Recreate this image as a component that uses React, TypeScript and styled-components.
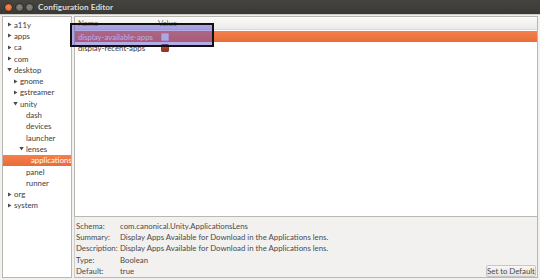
import React from 'react';
import styled, { createGlobalStyle } from 'styled-components';

const GlobalStyle = createGlobalStyle`
  html, body {
    margin: 0;
    padding: 0;
    background: #f2f1f0;
  }
  body {
    font-family: Lato, "Liberation Sans", sans-serif;
    font-size: 7.8px;
    color: #3c3c3c;
  }
`;

type TreeItem = { label: string; depth: number; arrow?: 'right' | 'down'; selected?: boolean };

const treeItems: TreeItem[] = [
  { label: 'a11y', depth: 0, arrow: 'right' },
  { label: 'apps', depth: 0, arrow: 'right' },
  { label: 'ca', depth: 0, arrow: 'right' },
  { label: 'com', depth: 0, arrow: 'right' },
  { label: 'desktop', depth: 0, arrow: 'down' },
  { label: 'gnome', depth: 1, arrow: 'right' },
  { label: 'gstreamer', depth: 1, arrow: 'right' },
  { label: 'unity', depth: 1, arrow: 'down' },
  { label: 'dash', depth: 2 },
  { label: 'devices', depth: 2 },
  { label: 'launcher', depth: 2 },
  { label: 'lenses', depth: 2, arrow: 'down' },
  { label: 'applications', depth: 3, selected: true },
  { label: 'panel', depth: 2 },
  { label: 'runner', depth: 2 },
  { label: 'org', depth: 0, arrow: 'right' },
  { label: 'system', depth: 0, arrow: 'right' },
];

const details = [
  ['Schema:', 'com.canonical.Unity.ApplicationsLens'],
  ['Summary:', 'Display Apps Available for Download in the Applications lens.'],
  ['Description:', 'Display Apps Available for Download in the Applications lens.'],
  ['Type:', 'Boolean'],
  ['Default:', 'true'],
];

const Arrow = ({ dir }: { dir: 'right' | 'down' }) => (
  <svg width="5" height="5" viewBox="0 0 5 5">
    {dir === 'right' ? <polygon points="1,0.5 4.5,2.5 1,4.5" fill="#4a4a4a" /> : <polygon points="0.3,1 4.7,1 2.5,4.5" fill="#4a4a4a" />}
  </svg>
);

const App = () => {
  return (
    <>
      <GlobalStyle />
      <Window>
        <TitleBar>
          <WinButtons>
            <WinButton $close />
            <WinButton />
            <WinButton />
          </WinButtons>
          <Title>Configuration Editor</Title>
        </TitleBar>
        <Body>
          <TreePanel>
            {treeItems.map((item) => (
              <TreeRow key={item.label} $selected={item.selected} $depth={item.depth}>
                <ArrowSlot>{item.arrow && <Arrow dir={item.arrow} />}</ArrowSlot>
                <span>{item.label}</span>
              </TreeRow>
            ))}
          </TreePanel>
          <RightColumn>
            <ListPanel>
              <HeaderRow>
                <NameCol>Name</NameCol>
                <ValueCol>Value</ValueCol>
              </HeaderRow>
              <KeyRow $selected>
                <NameCol>display-available-apps</NameCol>
                <ValueCol>
                  <Check />
                </ValueCol>
              </KeyRow>
              <KeyRow>
                <NameCol>display-recent-apps</NameCol>
                <ValueCol>
                  <Check $checked />
                </ValueCol>
              </KeyRow>
              <Highlight />
            </ListPanel>
            <InfoPanel>
              <InfoGrid>
                {details.map(([k, v]) => (
                  <React.Fragment key={k}>
                    <InfoCell>{k}</InfoCell>
                    <InfoCell>{v}</InfoCell>
                  </React.Fragment>
                ))}
              </InfoGrid>
              <DefaultButton>Set to Default</DefaultButton>
            </InfoPanel>
          </RightColumn>
        </Body>
      </Window>
    </>
  );
};

const Window = styled.div`
  width: 540px;
  height: 280px;
  display: flex;
  flex-direction: column;
  overflow: hidden;
  background: #f2f1f0;
`;

const TitleBar = styled.div`
  height: 14px;
  flex: none;
  display: flex;
  align-items: center;
  background: linear-gradient(#45443f, #3a3935);
  border-bottom: 1px solid #cfcdc9;
`;

const WinButtons = styled.div`
  display: flex;
  gap: 1.5px;
  padding-left: 4px;
  width: 34px;
`;

const WinButton = styled.div<{ $close?: boolean }>`
  width: 7px;
  height: 7px;
  border-radius: 50%;
  background: ${(p) => (p.$close ? 'radial-gradient(circle at 50% 40%, #f6894f, #d8551f)' : 'radial-gradient(circle at 50% 40%, #8a8882, #5d5c57)')};
  border: 0.5px solid #2e2d2a;
`;

const Title = styled.div`
  color: #dfdbd2;
  font-weight: bold;
  font-size: 8.2px;
  letter-spacing: 0.05px;
`;

const Body = styled.div`
  flex: 1;
  display: flex;
  gap: 2px;
  padding: 1px 2px 3px 2px;
`;

const TreePanel = styled.div`
  width: 68px;
  background: #fff;
  border: 1px solid #b9b7b2;
  padding-top: 2px;
  overflow: hidden;
`;

const TreeRow = styled.div<{ $selected?: boolean; $depth: number }>`
  height: 11.3px;
  display: flex;
  align-items: center;
  padding-left: ${(p) => 4 + [0, 6, 12, 17][p.$depth]}px;
  background: ${(p) => (p.$selected ? 'linear-gradient(#f3804d, #ea6b36)' : 'transparent')};
  color: ${(p) => (p.$selected ? '#fff' : '#3c3c3c')};
  white-space: nowrap;
`;

const ArrowSlot = styled.span`
  width: 7px;
  display: inline-flex;
  align-items: center;
  flex: none;
`;

const RightColumn = styled.div`
  flex: 1;
  display: flex;
  flex-direction: column;
  border-right: 1px solid #b9b7b2;
`;

const ListPanel = styled.div`
  position: relative;
  height: 199px;
  background: #fff;
  border: 1px solid #b9b7b2;
  border-right: none;
  flex: none;
`;

const HeaderRow = styled.div`
  height: 13px;
  display: flex;
  align-items: flex-end;
  background: linear-gradient(#fbfbfa, #ecebe9);
  border-bottom: 1px solid #dedcd8;
  color: #6a6a6a;
  padding-bottom: 1px;
  box-sizing: border-box;
`;

const KeyRow = styled.div<{ $selected?: boolean }>`
  height: 11px;
  display: flex;
  align-items: center;
  margin-top: ${(p) => (p.$selected ? '1px' : '0')};
  background: ${(p) => (p.$selected ? 'linear-gradient(#f2804e, #ea6c37)' : 'transparent')};
  color: ${(p) => (p.$selected ? '#fff' : '#3c3c3c')};
`;

const NameCol = styled.div`
  width: 80px;
  padding-left: 3px;
  white-space: nowrap;
`;

const ValueCol = styled.div`
  display: flex;
  align-items: center;
`;

const Check = styled.div<{ $checked?: boolean }>`
  width: 6px;
  height: 6px;
  margin-left: 3px;
  border: 1px solid ${(p) => (p.$checked ? '#8a3a2a' : '#d8d4d0')};
  background: ${(p) => (p.$checked ? 'linear-gradient(#c0503a, #8f3524)' : '#f5f3f4')};
  border-radius: 1px;
`;

const Highlight = styled.div`
  position: absolute;
  left: -5px;
  top: 6px;
  width: 140px;
  height: 20px;
  border: 2px solid #111;
  background: rgba(88, 72, 205, 0.45);
`;

const InfoPanel = styled.div`
  flex: 1;
  position: relative;
  display: flex;
  border-left: 1px solid #cfcdc9;
  border-bottom: 1px solid #b9b7b2;
  padding: 3px 0 0 1px;
`;

const InfoGrid = styled.div`
  display: grid;
  grid-template-columns: 44px auto;
  grid-auto-rows: 11.4px;
  align-items: center;
  color: #4a4a4a;
`;

const InfoCell = styled.div`
  white-space: nowrap;
`;

const DefaultButton = styled.div`
  position: absolute;
  right: 1px;
  bottom: 0;
  width: 48px;
  height: 10px;
  display: flex;
  align-items: center;
  justify-content: center;
  border: 1px solid #c8c6c2;
  border-radius: 2px;
  background: linear-gradient(#f8f7f6, #e6e4e1);
  color: #4a4a4a;
  white-space: nowrap;
`;

export default App;
